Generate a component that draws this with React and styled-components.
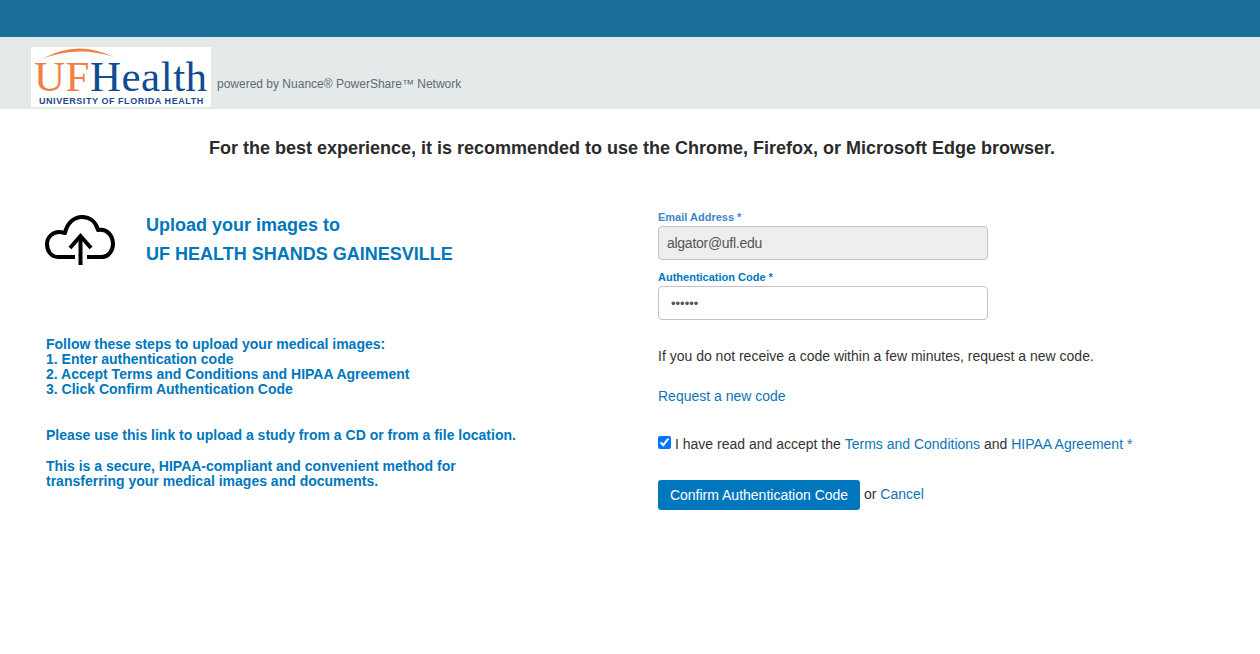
import React from 'react';
import styled, { createGlobalStyle } from 'styled-components';

const GlobalStyle = createGlobalStyle`
    html, body {
        margin: 0;
        padding: 0;
        background: #fff;
    }
    body {
        font-family: "Liberation Sans", Arial, sans-serif;
        color: #333;
    }
`;

const TopBar = styled.div`
    height: 37px;
    background: #1b6d9a;
`;

const BrandBar = styled.div`
    height: 72px;
    background: #e4e9e9;
    box-sizing: border-box;
    padding: 10px 0 2px 31px;
    display: flex;
    align-items: flex-end;
`;

const Logo = styled.div`
    width: 180px;
    height: 60px;
    background: #fff;
    position: relative;
    overflow: hidden;
    flex: none;
`;

const LogoArc = styled.svg`
    position: absolute;
    left: 0;
    top: 0;
`;

const LogoWord = styled.div`
    position: absolute;
    left: 3px;
    top: 10px;
    font-family: "Liberation Serif", "Times New Roman", serif;
    font-size: 43px;
    line-height: 40px;
    letter-spacing: 0.5px;
    white-space: nowrap;
    color: #0f4c92;
`;

const LogoUF = styled.span`
    color: #f08143;
`;

const LogoTag = styled.div`
    position: absolute;
    left: 8px;
    top: 50px;
    font-size: 9px;
    line-height: 9px;
    font-weight: 700;
    letter-spacing: 0.55px;
    white-space: nowrap;
    color: #21478b;
`;

const PoweredBy = styled.span`
    font-size: 12px;
    line-height: 14px;
    color: #5f6b73;
    margin: 0 0 16px 6px;
`;

const Notice = styled.h2`
    margin: 0;
    padding-top: 28px;
    height: 79px;
    box-sizing: border-box;
    font-size: 18px;
    line-height: 22px;
    font-weight: 700;
    color: #2b2b2b;
    text-align: center;
    padding-left: 4px;
`;

const Columns = styled.div`
    display: flex;
    padding-left: 46px;
`;

const LeftColumn = styled.div`
    width: 612px;
    flex: none;
    color: #0077bd;
    font-weight: 700;
    font-size: 14px;
    line-height: 15px;
`;

const UploadHead = styled.div`
    display: flex;
    align-items: flex-start;
    gap: 31px;
    padding-top: 23px;
    height: 149px;
    box-sizing: border-box;
    margin-left: -1px;
`;

const CloudIcon = styled.svg`
    flex: none;
    display: block;
    margin-top: 4px;
`;

const UploadTitle = styled.div`
    font-size: 18px;
    line-height: 29px;
`;

const Steps = styled.div`
    margin-bottom: 31px;
`;

const Para = styled.p`
    margin: 0 0 16px;
    width: ${props => props.$width || 'auto'};
`;

const RightColumn = styled.div`
    width: 520px;
    padding-top: 22px;
    font-size: 14px;
    line-height: 20px;
    color: #333;
`;

const FieldLabel = styled.label`
    display: block;
    font-size: 11px;
    line-height: 14px;
    font-weight: 700;
    color: ${props => props.$muted ? '#3d85c6' : '#0077bd'};
    margin-bottom: 2px;
`;

const Input = styled.input`
    display: block;
    width: 330px;
    height: 34px;
    box-sizing: border-box;
    border: 1px solid #c4c4c4;
    border-radius: 4px;
    padding: 0 0 0 ${props => props.$disabled ? '8px' : '12px'};
    font-family: "Liberation Sans", Arial, sans-serif;
    font-size: ${props => props.$disabled ? '14px' : '13px'};
    letter-spacing: ${props => props.$disabled ? '-0.27px' : '0'};
    color: #555;
    background: ${props => props.$disabled ? '#eeeeee' : '#fff'};
    margin-bottom: 10px;
    outline: none;
`;

const HelpText = styled.p`
    margin: 0;
    padding-top: 16px;
`;

const LinkRow = styled.p`
    margin: 0;
    padding-top: 20px;
`;

const Link = styled.a`
    color: #0f75b5;
    text-decoration: none;
`;

const AcceptRow = styled.label`
    display: flex;
    align-items: center;
    padding-top: 28px;
    white-space: pre;
`;

const Check = styled.input`
    width: 13px;
    height: 13px;
    margin: 0 4px 3px 0;
    accent-color: #0075ff;
`;

const ActionRow = styled.div`
    display: flex;
    align-items: center;
    padding-top: 26px;
    white-space: pre;
`;

const ConfirmButton = styled.button`
    height: 30px;
    width: 202px;
    border: none;
    border-radius: 3px;
    background: #0077bd;
    color: #fff;
    font-family: "Liberation Sans", Arial, sans-serif;
    font-size: 14px;
    padding: 0;
    margin-right: 4px;
`;

const OrText = styled.span`
    margin-bottom: 2px;
`;

class App extends React.Component {
    render() {
        return (
            <div>
                <GlobalStyle />
                <TopBar />
                <BrandBar>
                    <Logo>
                        <LogoArc width="180" height="20" viewBox="0 0 180 20">
                            <path d="M11 12 Q46 -8 83 10 Q46 -2 11 12 Z" fill="#f08143" />
                        </LogoArc>
                        <LogoWord><LogoUF>UF</LogoUF>Health</LogoWord>
                        <LogoTag>UNIVERSITY OF FLORIDA HEALTH</LogoTag>
                    </Logo>
                    <PoweredBy>powered by Nuance® PowerShare™ Network</PoweredBy>
                </BrandBar>
                <Notice>For the best experience, it is recommended to use the Chrome, Firefox, or Microsoft Edge browser.</Notice>
                <Columns>
                    <LeftColumn>
                        <UploadHead>
                            <CloudIcon width="70" height="50" viewBox="0 0 70 50" fill="none" stroke="#000" strokeWidth="4">
                                <path d="M30 42 H13 C6 42 2 36 2 29 C2 22 8 17 14 17 C16 17 18 17.5 20 18 C22 8 29 2 37 2 C45 2 51 7 53 15 C62 13 68 21 68 29 C68 36 63 42 57 42 H42" strokeLinejoin="round" />
                                <path d="M35.5 50 V21" />
                                <path d="M25 33 L35.5 21 L46 33" />
                            </CloudIcon>
                            <UploadTitle>
                                Upload your images to<br />
                                UF HEALTH SHANDS GAINESVILLE
                            </UploadTitle>
                        </UploadHead>
                        <Steps>
                            Follow these steps to upload your medical images:<br />
                            1. Enter authentication code<br />
                            2. Accept Terms and Conditions and HIPAA Agreement<br />
                            3. Click Confirm Authentication Code
                        </Steps>
                        <Para>Please use this link to upload a study from a CD or from a file location.</Para>
                        <Para $width="430px">This is a secure, HIPAA-compliant and convenient method for transferring your medical images and documents.</Para>
                    </LeftColumn>
                    <RightColumn>
                        <FieldLabel $muted>Email Address *</FieldLabel>
                        <Input $disabled type="text" value="algator@ufl.edu" readOnly />
                        <FieldLabel>Authentication Code *</FieldLabel>
                        <Input type="password" value="123456" readOnly />
                        <HelpText>If you do not receive a code within a few minutes, request a new code.</HelpText>
                        <LinkRow><Link href="#">Request a new code</Link></LinkRow>
                        <AcceptRow>
                            <Check type="checkbox" checked readOnly />
                            I have read and accept the <Link href="#">Terms and Conditions</Link> and <Link href="#">HIPAA Agreement *</Link>
                        </AcceptRow>
                        <ActionRow>
                            <ConfirmButton type="button">Confirm Authentication Code</ConfirmButton>
                            <OrText>or <Link href="#">Cancel</Link></OrText>
                        </ActionRow>
                    </RightColumn>
                </Columns>
            </div>
        );
    }
}

export default App;
